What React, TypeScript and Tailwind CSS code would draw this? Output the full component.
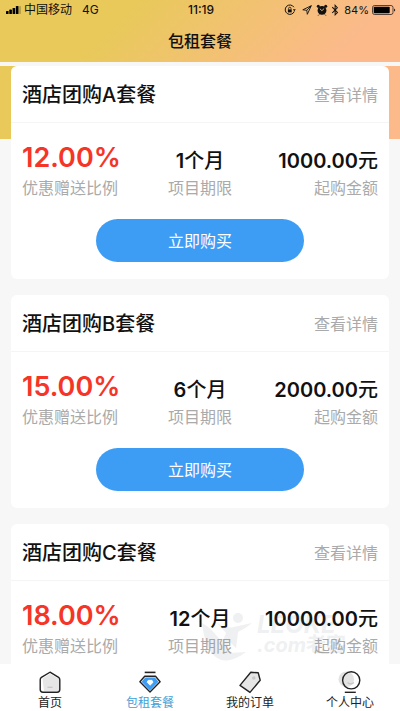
import React from 'react';
import { FaBluetoothB } from 'react-icons/fa';

interface Plan {
  name: string;
  rate: string;
  period: number;
  amount: string;
}

const plans: Plan[] = [
  { name: '酒店团购A套餐', rate: '12.00%', period: 1, amount: '1000.00' },
  { name: '酒店团购B套餐', rate: '15.00%', period: 6, amount: '2000.00' },
  { name: '酒店团购C套餐', rate: '18.00%', period: 12, amount: '10000.00' },
];

const StatusBar: React.FC = () => (
  <div className="grid grid-cols-3 items-center h-5 pl-1.5 pr-1 text-xs">
    <div className="flex items-center whitespace-nowrap">
      <svg className="w-4 h-2 mr-0.5" viewBox="0 0 16 8" aria-hidden="true">
        <rect x="0" y="5" width="2.6" height="3" rx="0.6" />
        <rect x="3.3" y="3.6" width="2.6" height="4.4" rx="0.6" />
        <rect x="6.6" y="2" width="2.6" height="6" rx="0.6" />
        <rect x="9.9" y="0" width="2.6" height="8" rx="0.6" />
        <rect x="13.2" y="0" width="1.6" height="8" rx="0.6" opacity="0.25" />
      </svg>
      <span>中国移动</span>
      <span className="ml-2.5">4G</span>
    </div>
    <span className="text-center font-medium">11:19</span>
    <div className="flex items-center justify-end gap-[3px]">
      <svg className="w-3 h-3 shrink-0" viewBox="0 0 12 12" fill="none" stroke="currentColor" aria-hidden="true">
        <path d="M9.9 3.2A4.7 4.7 0 1 0 10.3 7.4" />
        <path d="M8.8 5.2h3l-1.5 2z" fill="currentColor" stroke="none" />
        <rect x="3.9" y="5.4" width="3.8" height="3" fill="currentColor" stroke="none" />
        <path d="M4.6 5.5V4.4a1.2 1.2 0 0 1 2.4 0v1.1" strokeWidth="0.8" />
      </svg>
      <svg className="w-3 h-3 ml-0.5 shrink-0" viewBox="0 0 12 12" fill="none" stroke="currentColor" strokeWidth="0.9" aria-hidden="true">
        <path d="M10.3 1.7 1.8 5.8l4 .5.5 4z" />
        <path d="M10.3 1.7 5.8 6.3" />
      </svg>
      <svg className="w-3 h-3 shrink-0" viewBox="0 0 12 12" fill="currentColor" aria-hidden="true">
        <circle cx="6" cy="6.4" r="4.4" />
        <circle cx="2.3" cy="2.2" r="1.5" />
        <circle cx="9.7" cy="2.2" r="1.5" />
        <path d="M3.2 10.5 2.2 11.5M8.8 10.5l1 1" stroke="currentColor" />
        <path d="m3.9 4.8 2 1.9 2.2-2.1" fill="none" stroke="#f3bf73" strokeWidth="0.9" />
      </svg>
      <FaBluetoothB className="w-2 h-3 shrink-0" />
      <span className="ml-0.5 text-[11px]">84%</span>
      <svg className="w-6 h-2.5 shrink-0" viewBox="0 0 24 10" aria-hidden="true">
        <rect x="0.5" y="0.5" width="20.5" height="9" rx="2" fill="none" stroke="currentColor" strokeWidth="0.7" />
        <rect x="1.7" y="1.7" width="16" height="6.6" rx="0.8" />
        <path d="M22.2 3.4c1.3.5 1.3 2.7 0 3.2z" />
      </svg>
    </div>
  </div>
);

const PlanCard: React.FC<{ plan: Plan }> = ({ plan }) => (
  <article className="bg-white rounded-md pb-[17px]">
    <div className="flex items-center justify-between h-[57px] pt-0.5 px-[11px] border-b border-[#f5f5f5]">
      <h2 className="text-xl font-medium">{plan.name}</h2>
      <a href="#detail" className="text-base text-[#aaaaaa]">查看详情</a>
    </div>
    <dl className="grid grid-cols-3 items-end h-[77px] px-[11px] whitespace-nowrap">
      <div className="flex flex-col-reverse">
        <dt className="text-base leading-6 text-[#aaaaaa]">优惠赠送比例</dt>
        <dd className="text-[27px] leading-9 font-semibold text-[#f53527]">{plan.rate}</dd>
      </div>
      <div className="flex flex-col-reverse text-center">
        <dt className="text-base leading-6 text-[#aaaaaa]">项目期限</dt>
        <dd className="text-xl leading-[30px] font-medium">
          <span className="font-semibold">{plan.period}</span>个月
        </dd>
      </div>
      <div className="flex flex-col-reverse text-right">
        <dt className="text-base leading-6 text-[#aaaaaa]">起购金额</dt>
        <dd className="text-xl leading-[30px] font-medium">
          <span className="font-semibold">{plan.amount}</span>元
        </dd>
      </div>
    </dl>
    <button type="button" className="block w-[55%] h-[43px] mx-auto mt-[19px] rounded-full bg-[#3d9df5] text-base text-white">
      立即购买
    </button>
  </article>
);

const HomeIcon: React.FC = () => (
  <svg className="w-6 h-6" viewBox="0 0 24 24" fill="none" aria-hidden="true">
    <path d="M4.5 8.5 12 4l9 5v12H6z" fill="#e6e6e6" />
    <path d="M12 2.2 20.6 7.4q1.2.8 1.2 2.3v9.8q0 2.7-2.7 2.7H4.9q-2.7 0-2.7-2.7V9.7q0-1.5 1.2-2.3z" stroke="#222" strokeWidth="1.4" />
    <path d="M9.5 17.3h5" stroke="#c4c4c4" strokeWidth="1.2" />
  </svg>
);

const GemIcon: React.FC = () => (
  <svg className="w-6 h-6" viewBox="0 0 24 24" fill="none" aria-hidden="true">
    <path d="M6.7 2.4h10.8" stroke="#222" strokeWidth="1.6" />
    <path d="M6.7 6.3h10.8l4.6 5.5L12 22 1.9 11.8z" fill="#fff" stroke="#222" strokeWidth="1.4" strokeLinejoin="round" />
    <path d="M7.3 7.6h9.6l3.6 4.2L12 20.4l-8.5-8.6z" fill="#3d9df5" />
    <path d="M10.2 10.4h3.8l1 1.9-2.9 2.9-2.9-2.9z" fill="#fff" stroke="#fff" strokeLinejoin="round" />
  </svg>
);

const TagIcon: React.FC = () => (
  <svg className="w-6 h-6" viewBox="0 0 24 24" fill="none" aria-hidden="true">
    <path d="M12.8 2.3 20.2 2.7 22.2 10.3 12 22.4 2 15.4z" fill="#e6e6e6" stroke="#222" strokeWidth="1.4" strokeLinejoin="round" />
    <circle cx="15.8" cy="8" r="1.8" fill="#c8c8c8" />
  </svg>
);

const UserIcon: React.FC = () => (
  <svg className="w-6 h-6" viewBox="0 0 24 24" fill="none" aria-hidden="true">
    <circle cx="8.3" cy="9.3" r="7.8" fill="#e2e2e2" />
    <circle cx="13.2" cy="10.3" r="8.6" stroke="#222" strokeWidth="1.4" />
    <path d="M9.5 12.5q3.2 2.8 6.4 0" stroke="#c4c4c4" strokeWidth="1.2" />
    <path d="M6.8 22.3h11" stroke="#222" strokeWidth="1.4" />
  </svg>
);

const tabs = [
  { label: '首页', Icon: HomeIcon, active: false },
  { label: '包租套餐', Icon: GemIcon, active: true },
  { label: '我的订单', Icon: TagIcon, active: false },
  { label: '个人中心', Icon: UserIcon, active: false },
];

const Watermark: React.FC = () => (
  <div className="absolute bottom-[50px] right-[54px] flex items-center gap-1 text-gray-500 opacity-10 pointer-events-none" aria-hidden="true">
    <svg className="w-13 h-13" viewBox="0 0 52 52" fill="currentColor">
      <circle cx="37" cy="9" r="5" />
      <path d="M1 14Q12 20 21 34L25 24 16 14Q25 20 33 18L51 14Q44 20 37 23L35 39 28 32Q25 39 29 44L45 43Q22 60 10 43Q3 33 1 14z" />
    </svg>
    <div className="text-xl leading-5 font-bold italic">
      <div className="text-2xl leading-5">LEOKE</div>
      <div>.com<span className="not-italic">老客</span></div>
    </div>
  </div>
);

const App: React.FC = () => {
  return (
    <div className="flex flex-col h-screen bg-[#f7f7f7] text-[#111111] font-['Inter','Noto_Sans_CJK_SC',sans-serif]">
      <header className="h-[62px] shrink-0 bg-[linear-gradient(135deg,#e8c95a_30%,#fcba8b_85%)]">
        <StatusBar />
        <h1 className="pt-[9px] text-center text-base leading-6 font-medium">包租套餐</h1>
      </header>

      <main className="flex-1 min-h-0 mt-1 px-[11px] overflow-y-auto [scrollbar-width:none] bg-[linear-gradient(90deg,#e8c95a_30%,#fcba8b_85%)] bg-[length:100%_73px] bg-no-repeat">
        <div className="flex flex-col gap-4">
          {plans.map((plan) => (
            <PlanCard key={plan.name} plan={plan} />
          ))}
        </div>
      </main>

      <nav className="relative grid grid-cols-4 h-[47px] shrink-0 bg-white">
        {tabs.map(({ label, Icon, active }) => (
          <a
            key={label}
            href="#tab"
            className={`flex flex-col items-center pt-1.5 text-xs leading-[18px] ${active ? 'text-[#3d9fd8]' : 'text-[#222222]'}`}
          >
            <Icon />
            <span>{label}</span>
          </a>
        ))}
        <Watermark />
      </nav>
    </div>
  );
};

export default App;
